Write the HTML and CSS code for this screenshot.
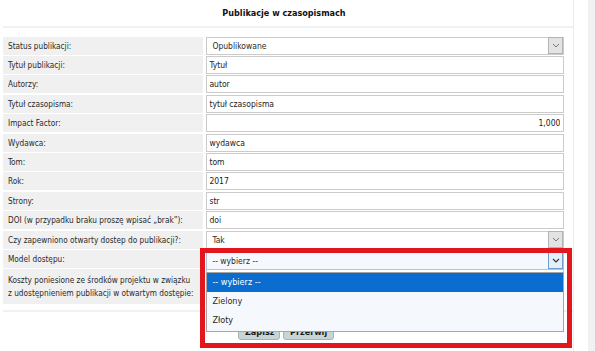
FILE: index.html
```html
<!DOCTYPE html>
<html lang="pl">
<head>
  <meta charset="UTF-8" />
  <title>Publikacje w czasopismach</title>
  <link rel="stylesheet" href="styles.css">
</head>
<body>
  <div class="page">
    <div class="panel">
      <h2 class="title">Publikacje w czasopismach</h2>

      <div class="form">
        <div class="label">Status publikacji:</div>
        <div class="field">
          <div class="select"><span>Opublikowane</span><span class="arrow"><svg width="8" height="5" viewBox="0 0 8 5"><path d="M1 1 L4 4 L7 1" fill="none" stroke="#777" stroke-width="1"/></svg></span></div>
        </div>

        <div class="label">Tytuł publikacji:</div>
        <div class="field"><input type="text" value="Tytuł"></div>

        <div class="label">Autorzy:</div>
        <div class="field"><input type="text" value="autor"></div>

        <div class="label">Tytuł czasopisma:</div>
        <div class="field"><input type="text" value="tytuł czasopisma"></div>

        <div class="label">Impact Factor:</div>
        <div class="field"><input type="text" class="num" value="1,000"></div>

        <div class="label">Wydawca:</div>
        <div class="field"><input type="text" value="wydawca"></div>

        <div class="label">Tom:</div>
        <div class="field"><input type="text" value="tom"></div>

        <div class="label">Rok:</div>
        <div class="field"><input type="text" value="2017"></div>

        <div class="label">Strony:</div>
        <div class="field"><input type="text" value="str"></div>

        <div class="label">DOI (w przypadku braku proszę wpisać „brak”):</div>
        <div class="field"><input type="text" value="doi"></div>

        <div class="label">Czy zapewniono otwarty dostep do publikacji?:</div>
        <div class="field">
          <div class="select"><span>Tak</span><span class="arrow"><svg width="8" height="5" viewBox="0 0 8 5"><path d="M1 1 L4 4 L7 1" fill="none" stroke="#777" stroke-width="1"/></svg></span></div>
        </div>

        <div class="label">Model dostępu:</div>
        <div class="field open">
          <div class="select active"><span>-- wybierz --</span><span class="arrow"><svg width="8" height="5" viewBox="0 0 8 5"><path d="M1 1 L4 4 L7 1" fill="none" stroke="#333" stroke-width="1.1"/></svg></span></div>
          <ul class="options">
            <li class="selected">-- wybierz --</li>
            <li>Zielony</li>
            <li>Złoty</li>
          </ul>
        </div>

        <div class="label tall">Koszty poniesione ze środków projektu w związku<br>z udostępnieniem publikacji w otwartym dostępie:</div>
        <div class="field"><input type="text" value=""></div>
      </div>

      <div class="actions">
        <button class="btn save">Zapisz</button>
        <button class="btn">Przerwij</button>
      </div>
    </div>
    <div class="side"></div>

    <div class="highlight"></div>
  </div>
</body>
</html>
```

FILE: styles.css
```css
body {
  margin: 0;
  font-family: 'DejaVu Sans Condensed', 'DejaVu Sans', sans-serif;
  font-size: 8.5px;
  color: #2a2a2a;
  background: #fff;
}

.page {
  position: relative;
  display: flex;
  height: 351px;
  overflow: hidden;
}

.panel {
  width: 570px;
  padding-left: 3px;
  border-right: 1px solid #ececec;
}

.side {
  margin-left: 14px;
  flex: 1;
  background: #f1f1f1;
}

.title {
  margin: 0;
  height: 26px;
  line-height: 26px;
  padding-right: 8px;
  text-align: center;
  font-size: 9px;
  font-weight: bold;
  color: #111;
  border-bottom: 2px solid #f1f1f1;
}

.form {
  display: grid;
  grid-template-columns: 200px 358px;
  column-gap: 3.4px;
  row-gap: 1.4px;
  margin-top: 8.7px;
}

.label {
  height: 18px;
  padding-left: 5px;
  display: flex;
  align-items: center;
  background: #f0f0f0;
  font-size: 8.2px;
  white-space: nowrap;
}

.label.tall {
  height: 35px;
  line-height: 13px;
}

.field {
  height: 18px;
}

.field input {
  width: 100%;
  height: 18px;
  box-sizing: border-box;
  margin: 0;
  padding: 0 2px;
  border: 1px solid #cbcbcb;
  font: inherit;
  color: #222;
  background: #fff;
}

.field input.num {
  text-align: right;
  padding-right: 3px;
}

.select {
  height: 18px;
  box-sizing: border-box;
  display: flex;
  align-items: center;
  justify-content: space-between;
  padding-left: 5px;
  border: 1px solid #cbcbcb;
  background: #fff;
}

.select .arrow {
  width: 13px;
  height: 15px;
  display: flex;
  align-items: center;
  justify-content: center;
  border: 1px solid #b3b3b3;
  background: #e3e3e3;
}

.open {
  position: relative;
}

.select.active {
  margin-top: 2px;
  border-color: #aac4e0;
  background: #f5f8fc;
}

.select.active .arrow {
  border-color: #6d9fd6;
  background: #e4eff9;
}

.options {
  position: absolute;
  top: 21.6px;
  left: 0;
  width: 100%;
  margin: 0;
  padding: 0;
  list-style: none;
  box-sizing: border-box;
  border: 1px solid #a5a5a5;
  background: #f5f8fc;
  z-index: 2;
}

.options li {
  height: 19.4px;
  line-height: 19.4px;
  padding-left: 5px;
  font-size: 9px;
}

.options li.selected {
  background: #0b6dcf;
  color: #fff;
}

.actions {
  margin-top: 6px;
  padding-top: 6px;
  padding-left: 235px;
  border-top: 2px solid #f1f1f1;
  display: flex;
  gap: 3px;
}

.btn {
  height: 22px;
  padding: 5px 6px 0;
  font-family: inherit;
  font-size: 9px;
  font-weight: bold;
  color: #1a1a1a;
  background: #c7d5d5;
  border: 1px solid #a3b5b5;
  border-radius: 3px;
}

.btn.save {
  width: 42px;
}

.highlight {
  position: absolute;
  left: 200px;
  top: 248px;
  width: 372px;
  height: 100px;
  box-sizing: border-box;
  border: 5px solid #e3161e;
  z-index: 3;
}
```
